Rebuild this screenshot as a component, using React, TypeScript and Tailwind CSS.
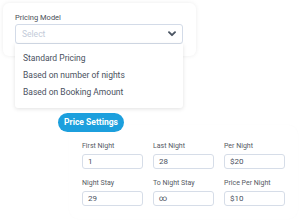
import React from "react";

const rows = [
  [
    { label: "First Night", value: "1" },
    { label: "Last Night", value: "28" },
    { label: "Per Night", value: "$20" },
  ],
  [
    { label: "Night Stay", value: "29" },
    { label: "To Night Stay", value: "∞" },
    { label: "Price Per Night", value: "$10" },
  ],
];

export default function App() {
  return (
    <div
      className="w-[301px] h-[220px] bg-white overflow-hidden flex flex-col pt-[3px] pl-[3px]"
      style={{ fontFamily: "Roboto, 'Liberation Sans', sans-serif" }}
    >
      <div className="relative z-20 w-[193px] h-[53px] rounded-[6px] bg-white shadow-[0_0_4px_rgba(0,0,0,0.08)] pl-[12px] pt-[10px]">
        <div className="text-[7.5px] leading-[9px] text-[#4a4f57]">Pricing Model</div>
        <div className="relative mt-[2px] w-[168px] h-[20px] rounded-[3px] border border-[#d3dbe8] flex items-center justify-between pl-[6px] pr-[5px]">
          <span className="text-[8.5px] text-[#c3cbd9]">Select</span>
          <svg width="8" height="6" viewBox="0 0 8 6" className="mr-[1px]">
            <path d="M1 1.2 L4 4.2 L7 1.2" fill="none" stroke="#4b5563" strokeWidth="1.9" strokeLinecap="round" strokeLinejoin="round" />
          </svg>
          <div className="absolute left-[-1px] top-[19px] w-[168px] h-[64px] bg-white rounded-b-[3px] shadow-[0_1px_4px_rgba(0,0,0,0.12)] flex flex-col pt-[8px] pl-[8px] gap-[5px]">
            <div className="text-[8.5px] leading-[12px] text-[#4a5160]">Standard Pricing</div>
            <div className="text-[8.5px] leading-[12px] text-[#4a5160]">Based on number of nights</div>
            <div className="text-[8.5px] leading-[12px] text-[#4a5160]">Based on Booking Amount</div>
          </div>
        </div>
      </div>

      <div className="relative z-10 ml-[55px] mt-[57px] w-[66px] h-[19px] rounded-full bg-[#1c9fdd] flex items-center justify-center">
        <span className="text-[8.5px] font-bold text-white">Price Settings</span>
      </div>

      <div className="ml-[66px] mt-[-7px] w-[229px] h-[94px] rounded-[10px] bg-white shadow-[0_0_2px_rgba(0,0,0,0.025)] pl-[13px] pt-[17px] flex flex-col gap-[10px]">
        {rows.map((row, i) => (
          <div key={i} className="flex gap-[10px]">
            {row.map((f) => (
              <div key={f.label} className="flex flex-col w-[61px]">
                <div className="text-[7px] leading-[9px] text-[#555a63]">{f.label}</div>
                <div className="mt-[3px] h-[15px] rounded-[3px] border border-[#d6dde8] flex items-center pl-[5px] text-[8px] text-[#4a5160]">
                  {f.value}
                </div>
              </div>
            ))}
          </div>
        ))}
      </div>
    </div>
  );
}
